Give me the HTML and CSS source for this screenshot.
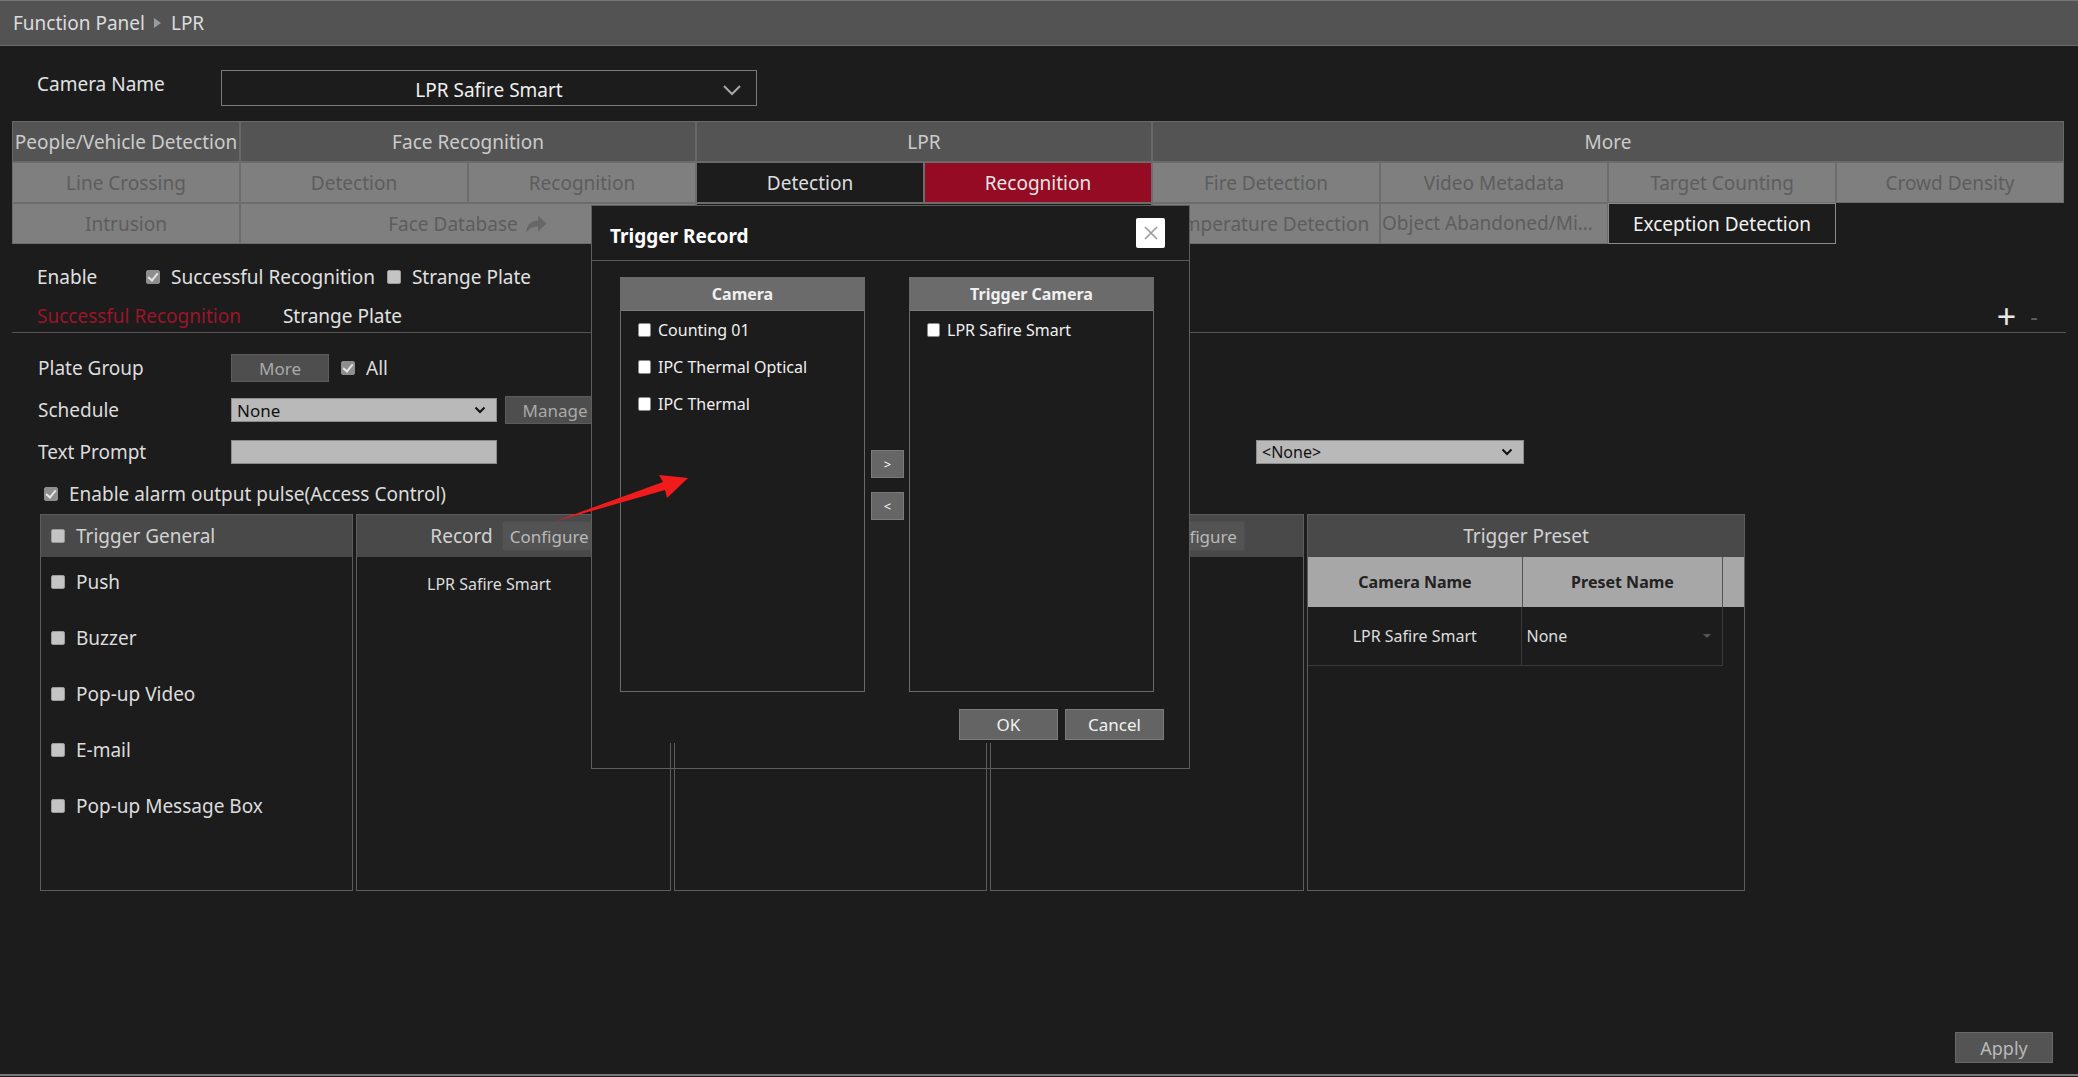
FILE: index.html
```html
<!DOCTYPE html>
<html>
<head>
    <title>LPR</title>
    <link rel="stylesheet" href="styles.css">
</head>
<body>
    <div class="topBar">
        <span>Function Panel</span><span class="crumbArrow"></span><span>LPR</span>
    </div>

    <div class="page">
        <div class="camRow">
            <span class="camLabel">Camera Name</span>
            <div class="camSelect">
                <span>LPR Safire Smart</span>
                <svg class="camChevron" width="20" height="12" viewBox="0 0 20 12"><path d="M2 2 L10 10 L18 2" fill="none" stroke="#a8a8a8" stroke-width="2"/></svg>
            </div>
        </div>

        <div class="tabGrid">
            <div class="tabCell head">People/Vehicle Detection</div>
            <div class="tabCell head span2">Face Recognition</div>
            <div class="tabCell head span2">LPR</div>
            <div class="tabCell head span4">More</div>

            <div class="tabCell off">Line Crossing</div>
            <div class="tabCell off">Detection</div>
            <div class="tabCell off">Recognition</div>
            <div class="tabCell current">Detection</div>
            <div class="tabCell selected">Recognition</div>
            <div class="tabCell off">Fire Detection</div>
            <div class="tabCell off">Video Metadata</div>
            <div class="tabCell off">Target Counting</div>
            <div class="tabCell off">Crowd Density</div>

            <div class="tabCell off">Intrusion</div>
            <div class="tabCell off span2">Face Database
                <svg class="shareIcon" width="24" height="22" viewBox="0 0 24 22"><path d="M2 20 C3 11 8 7.5 14 7.5 V2.5 L22.5 10.5 L14 18.5 V13.5 C8.5 13.5 5 15.5 2 20 Z" fill="#676767"/></svg>
            </div>
            <div class="tabCell current span2"></div>
            <div class="tabCell off">Temperature Detection</div>
            <div class="tabCell off clip">Object Abandoned/Missing</div>
            <div class="tabCell exception">Exception Detection</div>
        </div>

        <div class="enableRow">
            <span class="enableLabel">Enable</span>
            <span class="chk on"></span><span class="chkText">Successful Recognition</span>
            <span class="chk"></span><span class="chkText">Strange Plate</span>
        </div>

        <div class="subTabs">
            <span class="subTab active">Successful Recognition</span>
            <span class="subTab">Strange Plate</span>
            <span class="plusMinus"><span class="plus">+</span><span class="minus">-</span></span>
        </div>

        <div class="formRow firstRow">
            <span class="formLabel">Plate Group</span>
            <button class="greyBtn moreBtn">More</button>
            <span class="chk on"></span><span class="chkText">All</span>
        </div>
        <div class="formRow">
            <span class="formLabel">Schedule</span>
            <div class="lightSelect">
                <span>None</span>
                <svg width="12" height="8" viewBox="0 0 12 8"><path d="M1.5 1.5 L6 6 L10.5 1.5" fill="none" stroke="#111" stroke-width="2"/></svg>
            </div>
            <button class="greyBtn manageBtn">Manage</button>
        </div>
        <div class="formRow">
            <span class="formLabel">Text Prompt</span>
            <div class="lightInput"></div>
            <div class="lightSelect noneSelect">
                <span>&lt;None&gt;</span>
                <svg width="12" height="8" viewBox="0 0 12 8"><path d="M1.5 1.5 L6 6 L10.5 1.5" fill="none" stroke="#111" stroke-width="2"/></svg>
            </div>
        </div>
        <div class="formRow pulseRow">
            <span class="chk on"></span><span class="chkText">Enable alarm output pulse(Access Control)</span>
        </div>

        <div class="triggerPanel">
            <div class="trigCol">
                <div class="trigHead left"><span class="chk"></span><span class="chkText">Trigger General</span></div>
                <div class="generalList">
                    <div class="generalItem"><span class="chk"></span><span class="chkText">Push</span></div>
                    <div class="generalItem"><span class="chk"></span><span class="chkText">Buzzer</span></div>
                    <div class="generalItem"><span class="chk"></span><span class="chkText">Pop-up Video</span></div>
                    <div class="generalItem"><span class="chk"></span><span class="chkText">E-mail</span></div>
                    <div class="generalItem"><span class="chk"></span><span class="chkText">Pop-up Message Box</span></div>
                </div>
            </div>
            <div class="trigCol">
                <div class="trigHead"><span>Record</span><button class="configBtn">Configure</button></div>
                <div class="recordItem">LPR Safire Smart</div>
            </div>
            <div class="trigCol">
                <div class="trigHead"><span>Snapshot</span><button class="configBtn">Configure</button></div>
            </div>
            <div class="trigCol">
                <div class="trigHead"><span>Alarm Out</span><button class="configBtn">Configure</button></div>
            </div>
            <div class="trigCol">
                <div class="trigHead">Trigger Preset</div>
                <div class="presetHead">
                    <span class="presetCam">Camera Name</span>
                    <span class="presetName">Preset Name</span>
                    <span class="presetGap"></span>
                </div>
                <div class="presetRow">
                    <span class="presetCam">LPR Safire Smart</span>
                    <span class="presetName">None
                        <svg width="10" height="6" viewBox="0 0 10 6"><path d="M1 1 L5 5 L9 1 Z" fill="#555"/></svg>
                    </span>
                </div>
            </div>
        </div>

        <div class="applyRow"><button class="applyBtn">Apply</button></div>
    </div>
    <div class="pageLine"></div>

    <div class="dialog">
        <div class="dialogTitle">
            <span class="titleText">Trigger Record</span>
            <span class="closeBtn">
                <svg width="16" height="16" viewBox="0 0 16 16"><path d="M2 2 L14 14 M14 2 L2 14" stroke="#9a9a9a" stroke-width="1.6"/></svg>
            </span>
        </div>
        <div class="dialogBody">
            <div class="camList">
                <div class="listHead">Camera</div>
                <div class="listItem"><span class="wchk"></span>Counting 01</div>
                <div class="listItem"><span class="wchk"></span>IPC Thermal Optical</div>
                <div class="listItem"><span class="wchk"></span>IPC Thermal</div>
            </div>
            <div class="moveBtns">
                <button class="moveBtn">&gt;</button>
                <button class="moveBtn">&lt;</button>
            </div>
            <div class="camList">
                <div class="listHead">Trigger Camera</div>
                <div class="listItem"><span class="wchk"></span>LPR Safire Smart</div>
            </div>
        </div>
        <div class="dialogFoot">
            <button class="dlgBtn">OK</button>
            <button class="dlgBtn">Cancel</button>
        </div>
    </div>

    <svg class="annotation" width="2078" height="1077" viewBox="0 0 2078 1077">
        <polygon points="553,522 663,482 659,475 688,478 667,498 665,490" fill="#f21b1b"/>
    </svg>
</body>
</html>
```

FILE: styles.css
```css
html,body{
    margin: 0;
    padding: 0;
}
body{
    width: 2078px;
    height: 1077px;
    position: relative;
    overflow: hidden;
    background-color: #1c1c1c;
    color: #d4d4d4;
    font-family: "Noto Sans", "Liberation Sans", sans-serif;
    font-size: 19px;
}
button{
    font-family: inherit;
    cursor: pointer;
}

.topBar{
    border-top: 1px solid #767676;
    border-bottom: 1px solid #6c6c6c;
    box-sizing: border-box;
    height: 46px;
    background-color: #535353;
    display: flex;
    align-items: center;
    padding-left: 13px;
    color: #dcdcdc;
}
.topBar .crumbArrow{
    width: 0;
    height: 0;
    border-left: 7px solid #9a9a9a;
    border-top: 5px solid transparent;
    border-bottom: 5px solid transparent;
    margin: 0 10px 0 9px;
}

.page{
    padding: 0 12px;
}

.camRow{
    display: flex;
    margin-top: 24px;
    height: 36px;
}
.camRow .camLabel{
    width: 184px;
    padding-left: 25px;
    line-height: 28px;
    color: #e2e2e2;
}
.camRow .camSelect{
    width: 536px;
    box-sizing: border-box;
    border: 1px solid #7a7a7a;
    display: flex;
    align-items: center;
    justify-content: center;
    position: relative;
    color: #f0f0f0;
    padding-top: 4px;
}
.camRow .camChevron{
    position: absolute;
    right: 14px;
    top: 13px;
}

.tabGrid{
    display: grid;
    grid-template-columns: repeat(9, 228px);
    grid-auto-rows: 41px;
    margin-top: 15px;
}
.tabCell{
    box-sizing: border-box;
    border: 1px solid #686868;
    display: flex;
    align-items: center;
    justify-content: center;
    white-space: nowrap;
}
.tabCell.span2{ grid-column: span 2; }
.tabCell.span4{ grid-column: span 4; }
.tabCell.head{
    background-color: #545454;
    color: #cbcbcb;
}
.tabCell.off{
    background-color: #7f7f7f;
    color: #5d5d5d;
    border-color: #6c6c6c;
}
.tabCell.current{
    background-color: #1c1c1c;
    color: #dedede;
    border-color: #6c6c6c;
}
.tabCell.selected{
    background-color: #940b23;
    color: #e4e4e4;
    border-color: #6c6c6c;
}
.tabCell.exception{
    background-color: #1c1c1c;
    color: #f0f0f0;
    border-color: #8a8a8a;
}
.tabCell.clip{
    display: block;
    overflow: hidden;
    text-overflow: ellipsis;
    line-height: 39px;
    padding-left: 1px;
    padding-right: 10px;
}
.tabCell .shareIcon{
    margin-left: 6px;
}

.chk{
    display: inline-block;
    width: 14px;
    height: 14px;
    box-sizing: border-box;
    border: 1px solid #9a9a9a;
    border-radius: 2px;
    background-color: #c4c4c4;
    position: relative;
    flex: none;
}
.chk.on{
    background-color: #8e8e8e;
    border-color: #8e8e8e;
}
.chk.on::after{
    content: "";
    position: absolute;
    left: 3px;
    top: 0px;
    width: 4px;
    height: 8px;
    border-right: 2px solid #e6e6e6;
    border-bottom: 2px solid #e6e6e6;
    transform: rotate(40deg);
}
.chkText{
    margin-left: 11px;
}

.enableRow{
    display: flex;
    align-items: center;
    height: 28px;
    margin-top: 19px;
    padding-left: 25px;
    color: #e0e0e0;
}
.enableRow .enableLabel{
    width: 109px;
}
.enableRow .chkText{
    margin-right: 12px;
}

.subTabs{
    display: flex;
    align-items: center;
    height: 32px;
    margin-top: 9px;
    padding-left: 25px;
    border-bottom: 1px solid #555;
}
.subTabs .subTab{
    margin-right: 42px;
    color: #e2e2e2;
}
.subTabs .subTab.active{
    color: #9c1429;
}
.subTabs .plusMinus{
    margin-left: auto;
    margin-right: 28px;
    display: flex;
    align-items: center;
}
.subTabs .plus{
    font-size: 34px;
    color: #e8e8e8;
    line-height: 30px;
}
.subTabs .minus{
    font-size: 24px;
    color: #5e5e5e;
    margin-left: 14px;
    line-height: 30px;
}

.formRow{
    display: flex;
    align-items: center;
    height: 28px;
    margin-top: 14px;
    padding-left: 26px;
    color: #dcdcdc;
}
.formRow.firstRow{
    margin-top: 21px;
}
.formRow .formLabel{
    width: 193px;
}
.greyBtn{
    height: 28px;
    background-color: #4e4e4e;
    border: 1px solid #5c5c5c;
    color: #a9a9a9;
    font-size: 17px;
    padding: 0;
}
.moreBtn{
    width: 98px;
    margin-right: 12px;
}
.manageBtn{
    width: 100px;
    margin-left: 8px;
}
.lightSelect, .lightInput{
    width: 266px;
    height: 24px;
    box-sizing: border-box;
    border: 1px solid #8c8c8c;
    background-color: #b9b9b9;
}
.lightSelect{
    display: flex;
    align-items: center;
    justify-content: space-between;
    padding: 0 10px 0 5px;
    color: #111;
    font-size: 17px;
}
.noneSelect{
    width: 268px;
    margin-left: 759px;
    font-size: 16px;
}
.pulseRow{
    padding-left: 32px;
}

.triggerPanel{
    display: grid;
    grid-template-columns: 313px 315px 313px 314px 438px;
    column-gap: 3px;
    margin: 6px 0 0 28px;
    height: 377px;
}
.trigCol{
    border: 1px solid #5c5c5c;
    box-sizing: border-box;
}
.trigHead{
    height: 42px;
    background-color: #494949;
    display: flex;
    align-items: center;
    justify-content: center;
    color: #d2d2d2;
}
.trigHead.left{
    justify-content: flex-start;
    padding-left: 10px;
}
.configBtn{
    margin-left: 9px;
    height: 30px;
    width: 95px;
    padding: 0;
    background-color: #535353;
    border: 1px solid #4c4c4c;
    color: #b9b9b9;
    font-size: 17px;
}
.generalList{
    padding-top: 4px;
}
.generalItem{
    height: 42px;
    margin-bottom: 14px;
    display: flex;
    align-items: center;
    padding-left: 10px;
    color: #dcdcdc;
}
.recordItem{
    padding: 16px 0 0 70px;
    font-size: 16px;
    color: #dcdcdc;
}
.presetHead, .presetRow{
    display: flex;
}
.presetHead{
    height: 50px;
    background-color: #a7a7a7;
    color: #222;
    font-weight: bold;
    font-size: 16px;
}
.presetHead span, .presetRow span{
    box-sizing: border-box;
    display: flex;
    align-items: center;
    justify-content: center;
}
.presetCam{ width: 214px; }
.presetName{ width: 201px; }
.presetGap{ flex: 1; }
.presetHead .presetName{
    border-left: 1px solid #555;
    border-right: 1px solid #555;
}
.presetRow{
    height: 59px;
    width: 415px;
    box-sizing: border-box;
    border-bottom: 1px solid #3a3a3a;
    border-right: 1px solid #3a3a3a;
    font-size: 16px;
    color: #dedede;
}
.presetRow .presetName{
    border-left: 1px solid #3a3a3a;
    justify-content: space-between;
    padding: 0 10px 0 4px;
}

.applyRow{
    display: flex;
    justify-content: flex-end;
    margin-top: 141px;
    padding-right: 13px;
}
.applyBtn{
    width: 98px;
    height: 31px;
    padding: 0;
    background-color: #545454;
    border: 1px solid #686868;
    color: #b9b9b9;
    font-size: 18px;
}
.pageLine{
    margin-top: 11px;
    height: 2px;
    background-color: #7a7a7a;
}

/* popup */
.dialog{
    position: absolute;
    left: 591px;
    top: 205px;
    width: 599px;
    height: 564px;
    box-sizing: border-box;
    border: 1px solid #5e5e5e;
    background: linear-gradient(#1c1c1c 0 537px, transparent 537px);
    z-index: 5;
}
.dialogTitle{
    height: 54px;
    border-bottom: 1px solid #5a5a5a;
    display: flex;
    align-items: center;
    justify-content: space-between;
    padding: 0 24px 0 18px;
    font-weight: bold;
    font-size: 19px;
    color: #fff;
}
.dialogTitle .titleText{
    padding-top: 6px;
}
.closeBtn{
    width: 29px;
    height: 30px;
    background-color: #fff;
    border-radius: 2px;
    display: flex;
    align-items: center;
    justify-content: center;
}
.dialogBody{
    display: flex;
    margin-top: 16px;
    padding-left: 28px;
}
.camList{
    width: 245px;
    height: 415px;
    box-sizing: border-box;
    border: 1px solid #6a6a6a;
    font-size: 16px;
    color: #f0f0f0;
}
.listHead{
    height: 32px;
    background-color: #6b6b6b;
    border-bottom: 1px solid #7a7a7a;
    display: flex;
    align-items: center;
    justify-content: center;
    font-weight: bold;
}
.listItem{
    height: 37px;
    display: flex;
    align-items: center;
    padding-left: 17px;
}
.wchk{
    width: 13px;
    height: 14px;
    box-sizing: border-box;
    background-color: #fff;
    border: 1px solid #8a8a8a;
    border-radius: 2px;
    margin-right: 7px;
}
.moveBtns{
    width: 44px;
    padding-top: 173px;
    padding-left: 6px;
    box-sizing: border-box;
}
.moveBtn{
    display: block;
    width: 33px;
    height: 28px;
    padding: 0;
    margin-bottom: 14px;
    background-color: #666;
    border: 1px solid #7a7a7a;
    color: #fff;
    font-size: 13px;
}
.dialogFoot{
    display: flex;
    justify-content: flex-end;
    gap: 7px;
    margin-top: 17px;
    padding-right: 25px;
}
.dlgBtn{
    width: 99px;
    height: 31px;
    padding: 0;
    background-color: #646464;
    border: 1px solid #7c7c7c;
    color: #f2f2f2;
    font-size: 17px;
}

.annotation{
    position: absolute;
    left: 0;
    top: 0;
    pointer-events: none;
    z-index: 10;
}
```
